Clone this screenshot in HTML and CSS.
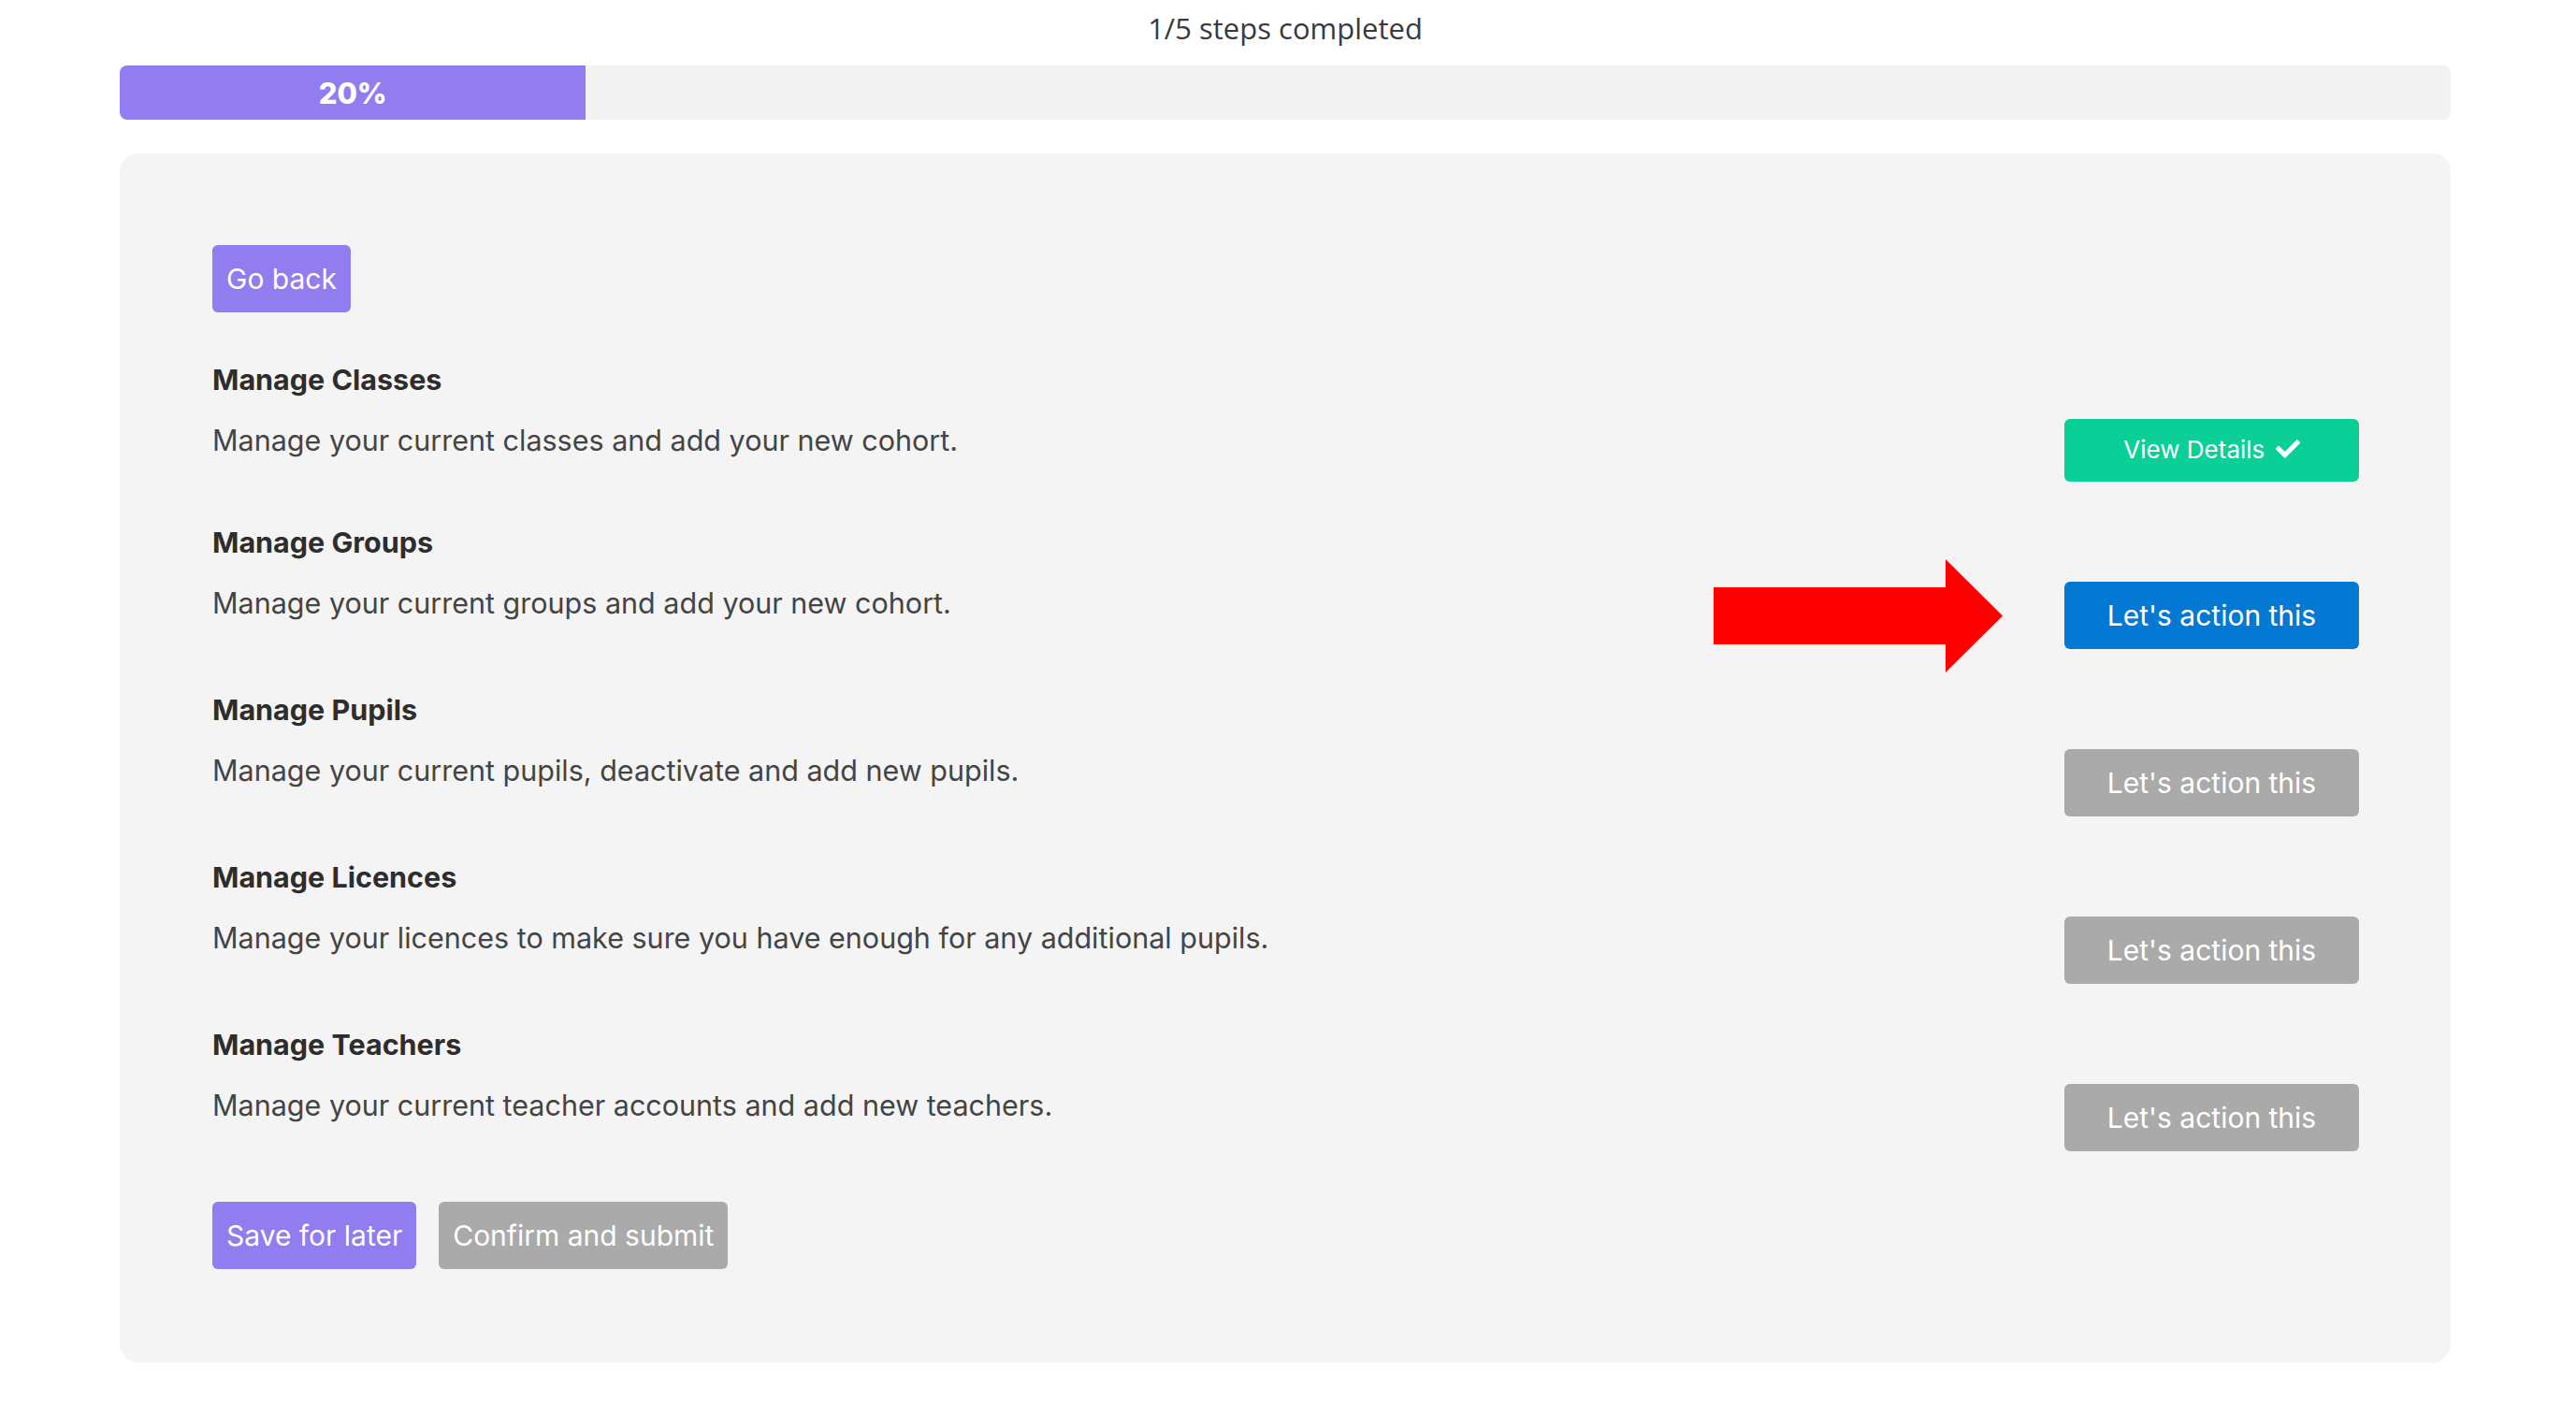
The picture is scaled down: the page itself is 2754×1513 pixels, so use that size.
FILE: index.html
```html
<!DOCTYPE html>
<html>
<head>
    <meta content="width=device-width, initial-scale=1.0" name="viewport">
    <link rel="stylesheet" href="styles.css">
</head>
<body>
    <div class="page">
        <div class="progress-caption">1/5 steps completed</div>
        <div class="progress">
            <div class="progress-fill" style="width: 20%">20%</div>
        </div>

        <div class="card">
            <button class="btn btn-purple">Go back</button>

            <div class="tasks">
                <div class="task">
                    <div class="task-title">Manage Classes</div>
                    <div class="task-body">
                        <p class="task-desc">Manage your current classes and add your new cohort.</p>
                        <button class="btn btn-task btn-green">View Details
                            <svg class="check" viewBox="0 0 512 512"><path d="M173.9 439.4l-166.4-166.4c-10-10-10-26.2 0-36.2l36.2-36.2c10-10 26.2-10 36.2 0L192 312.7 432.1 72.6c10-10 26.2-10 36.2 0l36.2 36.2c10 10 10 26.2 0 36.2l-294.4 294.4c-10 10-26.2 10-36.2 0z"/></svg>
                        </button>
                    </div>
                </div>

                <div class="task">
                    <div class="task-title">Manage Groups</div>
                    <div class="task-body">
                        <p class="task-desc">Manage your current groups and add your new cohort.</p>
                        <svg class="pointer" viewBox="0 0 309 121"><polygon points="0,30 248,30 248,0 309,60.5 248,121 248,91 0,91"/></svg>
                        <button class="btn btn-task btn-blue">Let's action this</button>
                    </div>
                </div>

                <div class="task">
                    <div class="task-title">Manage Pupils</div>
                    <div class="task-body">
                        <p class="task-desc">Manage your current pupils, deactivate and add new pupils.</p>
                        <button class="btn btn-task btn-grey">Let's action this</button>
                    </div>
                </div>

                <div class="task">
                    <div class="task-title">Manage Licences</div>
                    <div class="task-body">
                        <p class="task-desc">Manage your licences to make sure you have enough for any additional pupils.</p>
                        <button class="btn btn-task btn-grey">Let's action this</button>
                    </div>
                </div>

                <div class="task">
                    <div class="task-title">Manage Teachers</div>
                    <div class="task-body">
                        <p class="task-desc">Manage your current teacher accounts and add new teachers.</p>
                        <button class="btn btn-task btn-grey">Let's action this</button>
                    </div>
                </div>
            </div>

            <div class="actions">
                <button class="btn btn-purple">Save for later</button>
                <button class="btn btn-grey">Confirm and submit</button>
            </div>
        </div>
    </div>
</body>
</html>
```

FILE: styles.css
```css
body, html {
    margin: 0;
    padding: 0;
    background: #fff;
}
body {
    font-family: Inter, Roboto, sans-serif;
    color: #333;
}
.page {
    padding: 8px 134px 40px 128px;
}
.progress-caption {
    font-family: "Open Sans", sans-serif;
    font-size: 31px;
    line-height: 45px;
    text-align: center;
    color: #3a3a3a;
}
.progress {
    margin-top: 17px;
    height: 58px;
    background: #f2f2f2;
    border-radius: 8px;
    overflow: hidden;
    display: flex;
}
.progress-fill {
    background: #917cf0;
    color: #fff;
    font-weight: 800;
    font-size: 31px;
    display: flex;
    align-items: center;
    justify-content: center;
}
.card {
    margin-top: 36px;
    background: #f4f4f4;
    border-radius: 20px;
    padding: 98px 98px 100px 99px;
}
.btn {
    font-family: Inter, Roboto, sans-serif;
    font-size: 30px;
    line-height: 44px;
    color: #fff;
    border: 0;
    border-radius: 6px;
    padding: 14px 15px;
    cursor: pointer;
}
.btn-purple {
    background: #917cf0;
}
.btn-grey {
    background: #aaaaaa;
}
.btn-blue {
    background: #0479d3;
}
.btn-green {
    background: #0acf97;
    font-size: 26px;
    padding: 11px 14px 12px;
}
.tasks {
    margin-top: 49px;
    display: flex;
    flex-direction: column;
    gap: 42px;
}
.task-title {
    font-weight: 700;
    font-size: 30.5px;
    line-height: 45px;
    color: #2d2d2d;
}
.task-body {
    position: relative;
    margin-top: 20px;
    display: flex;
    align-items: flex-start;
    justify-content: space-between;
}
.task-desc {
    margin: 0;
    font-size: 30.5px;
    line-height: 45px;
    color: #444;
}
.btn-task {
    width: 315px;
    flex-shrink: 0;
}
.check {
    width: 26px;
    height: 26px;
    fill: #fff;
    vertical-align: -3px;
    margin-left: 4px;
}
.pointer {
    position: absolute;
    right: 381px;
    top: -24px;
    width: 309px;
    height: 121px;
    fill: #ff0000;
}
.actions {
    margin-top: 54px;
    display: flex;
    gap: 24px;
}
```
